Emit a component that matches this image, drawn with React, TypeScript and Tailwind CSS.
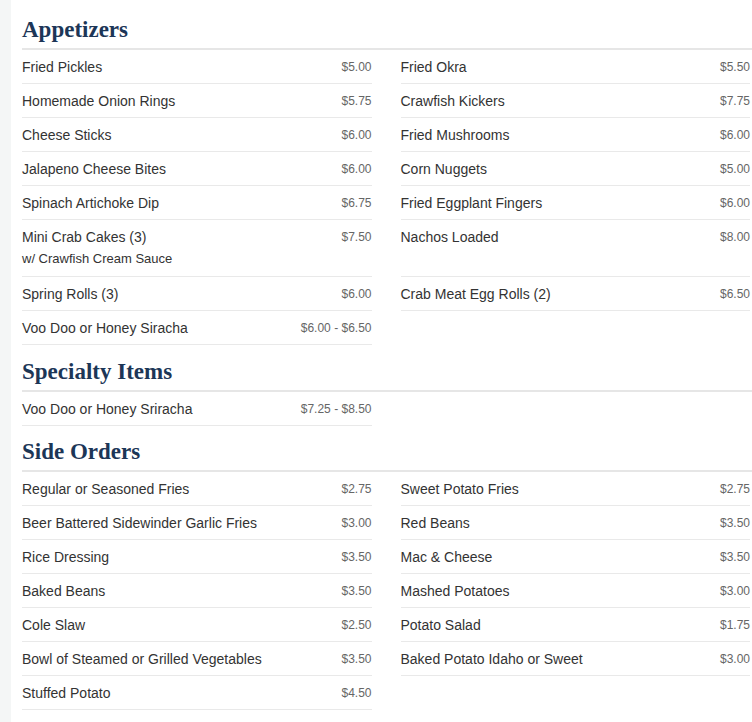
import React from "react";

type Item = { name: string; price: string; sub?: string };

const appetizersLeft: Item[] = [
  { name: "Fried Pickles", price: "$5.00" },
  { name: "Homemade Onion Rings", price: "$5.75" },
  { name: "Cheese Sticks", price: "$6.00" },
  { name: "Jalapeno Cheese Bites", price: "$6.00" },
  { name: "Spinach Artichoke Dip", price: "$6.75" },
  { name: "Mini Crab Cakes (3)", price: "$7.50", sub: "w/ Crawfish Cream Sauce" },
  { name: "Spring Rolls (3)", price: "$6.00" },
  { name: "Voo Doo or Honey Siracha", price: "$6.00 - $6.50" },
];
const appetizersRight: Item[] = [
  { name: "Fried Okra", price: "$5.50" },
  { name: "Crawfish Kickers", price: "$7.75" },
  { name: "Fried Mushrooms", price: "$6.00" },
  { name: "Corn Nuggets", price: "$5.00" },
  { name: "Fried Eggplant Fingers", price: "$6.00" },
  { name: "Nachos Loaded", price: "$8.00" },
  { name: "Crab Meat Egg Rolls (2)", price: "$6.50" },
];
const specialtyLeft: Item[] = [
  { name: "Voo Doo or Honey Sriracha", price: "$7.25 - $8.50" },
];
const sidesLeft: Item[] = [
  { name: "Regular or Seasoned Fries", price: "$2.75" },
  { name: "Beer Battered Sidewinder Garlic Fries", price: "$3.00" },
  { name: "Rice Dressing", price: "$3.50" },
  { name: "Baked Beans", price: "$3.50" },
  { name: "Cole Slaw", price: "$2.50" },
  { name: "Bowl of Steamed or Grilled Vegetables", price: "$3.50" },
  { name: "Stuffed Potato", price: "$4.50" },
];
const sidesRight: Item[] = [
  { name: "Sweet Potato Fries", price: "$2.75" },
  { name: "Red Beans", price: "$3.50" },
  { name: "Mac & Cheese", price: "$3.50" },
  { name: "Mashed Potatoes", price: "$3.00" },
  { name: "Potato Salad", price: "$1.75" },
  { name: "Baked Potato Idaho or Sweet", price: "$3.00" },
];

function Row({ item }: { item: Item }) {
  return (
    <div className="flex h-full justify-between items-start border-b border-[#e9e9e9] pt-[7px] pb-[6px]">
      <div className="flex flex-col">
        <span className="text-[14px] leading-[20px] text-[#333]">{item.name}</span>
        {item.sub && (
          <span className="text-[13px] leading-[22px] pt-[1px] text-[#333]">{item.sub}</span>
        )}
      </div>
      <span className="text-[12px] leading-[20px] text-[#666]">{item.price}</span>
    </div>
  );
}

function Section({
  title,
  left,
  right,
  pt,
}: {
  title: string;
  left: Item[];
  right: Item[];
  pt: string;
}) {
  const rows = Math.max(left.length, right.length);
  const cells: React.ReactNode[] = [];
  for (let i = 0; i < rows; i++) {
    cells.push(
      <div key={"l" + i}>{left[i] ? <Row item={left[i]} /> : null}</div>
    );
    cells.push(
      <div key={"r" + i}>{right[i] ? <Row item={right[i]} /> : null}</div>
    );
  }
  return (
    <div>
      <h2
        className={`${pt} pb-[3px] border-b-2 border-[#e6e6e6] text-[23px] leading-[30px] font-bold text-[#1c3657]`}
        style={{ fontFamily: '"Liberation Serif", serif' }}
      >
        {title}
      </h2>
      <div className="grid grid-cols-2 gap-x-[29px] pr-[2px]">{cells}</div>
    </div>
  );
}

export default function App() {
  return (
    <div
      className="flex min-h-[722px] bg-white"
      style={{ fontFamily: '"Liberation Sans", Arial, sans-serif' }}
    >
      <div className="w-[11px] shrink-0 bg-[#f4f6f6]" />
      <div className="flex-1 pl-[11px]">
        <Section title="Appetizers" left={appetizersLeft} right={appetizersRight} pt="pt-[15px]" />
        <Section title="Specialty Items" left={specialtyLeft} right={[]} pt="pt-[12px]" />
        <Section title="Side Orders" left={sidesLeft} right={sidesRight} pt="pt-[11px]" />
      </div>
    </div>
  );
}
